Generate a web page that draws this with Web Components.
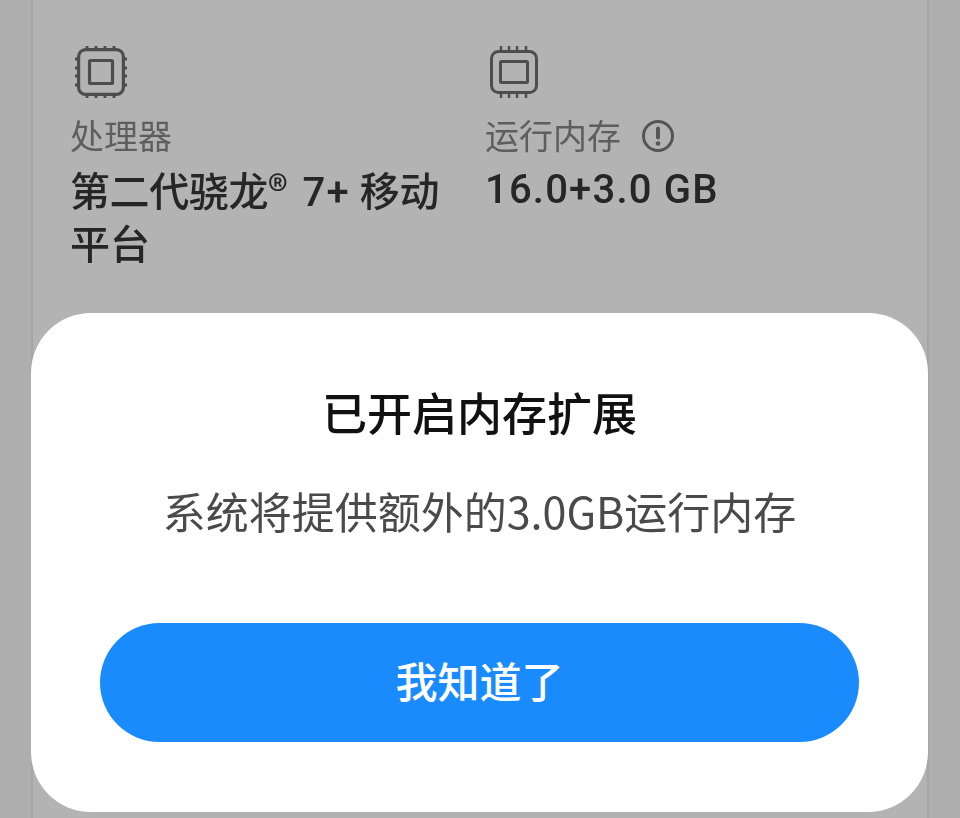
<!DOCTYPE html>
<html lang="zh">
<head>
<meta charset="utf-8">
<title>内存扩展</title>
<style>
  html, body { margin: 0; padding: 0; height: 100%; }
  body {
    background: #aeaeae;
    font-family: "Noto Sans CJK SC", "Noto Sans", sans-serif;
    overflow: hidden;
  }
  .reg { font-family: "Noto Sans CJK SC", sans-serif; letter-spacing: 5px; }
  .num { letter-spacing: 1.2px; }
  .tight { letter-spacing: -0.4px; }
</style>
</head>
<body>
<spec-page>
  <spec-item slot="specs" label="处理器" icon="cpu"><span class="tight">第二代骁龙</span><span class="reg">®</span> <span class="num">7+</span> <span class="tight">移动</span><br>平台</spec-item>
  <spec-item slot="specs" label="运行内存" icon="ram" info="true"><span class="num">16.0+3.0 GB</span></spec-item>
  <info-dialog slot="dialog" heading="已开启内存扩展" message="系统将提供额外的3.0GB运行内存" action="我知道了"></info-dialog>
</spec-page>

<script>
const specPageTemplate = document.createElement("template");
specPageTemplate.innerHTML = `
  <style>
    :host {
      display: block;
      position: relative;
      height: 818px;
      box-sizing: border-box;
      padding: 0 31px;
    }
    .card {
      height: 100%;
      box-sizing: border-box;
      background: #b3b3b3;
      border-left: 2px solid #a5a5a5;
      border-right: 2px solid #a5a5a5;
      padding: 46px 0 0 37px;
    }
    .specs {
      display: grid;
      grid-template-columns: 415px 1fr;
    }
    .overlay {
      position: absolute;
      left: 31px;
      right: 32px;
      bottom: 6px;
    }
  </style>
  <div class="card">
    <div class="specs"><slot name="specs"></slot></div>
  </div>
  <div class="overlay"><slot name="dialog"></slot></div>
`;
class SpecPage extends HTMLElement {
  constructor() {
    super();
    this.attachShadow({ mode: "open" });
  }

  connectedCallback() {
    this.shadowRoot.append(specPageTemplate.content.cloneNode(true));
  }
}

const icons = {
  cpu: `<svg width="52" height="52" viewBox="0 0 52 52" fill="none" stroke="#4d4d4d" stroke-width="3.2">
      <rect x="3.6" y="3.6" width="44.8" height="44.8" rx="7"/>
      <rect x="14.5" y="14.5" width="23" height="23" rx="1"/>
      <path stroke-width="2.8" d="M12 0v3M21 0v3M30 0v3M39 0v3M12 49v3M21 49v3M30 49v3M39 49v3M0 13h3M0 22h3M0 30h3M0 39h3M49 13h3M49 22h3M49 30h3M49 39h3"/>
    </svg>`,
  ram: `<svg width="48" height="52" viewBox="0 0 48 52" fill="none" stroke="#4d4d4d" stroke-width="3">
      <rect x="1.5" y="5.5" width="45" height="41" rx="7"/>
      <rect x="10.5" y="15.5" width="27" height="21" rx="1"/>
      <path stroke-width="2.4" d="M11 0v4M19 0v4M27 0v4M36 0v4M11 48v4M19 48v4M27 48v4M36 48v4"/>
    </svg>`,
};

const specItemTemplate = document.createElement("template");
specItemTemplate.innerHTML = `
  <style>
    :host { display: block; }
    .icon { height: 52px; padding-left: 5px; display: flex; }
    .label {
      display: flex;
      align-items: center;
      gap: 20px;
      margin-top: 10px;
      height: 54px;
      font-size: 34px;
      color: #5e5e5e;
      filter: blur(0.4px);
    }
    .label svg { display: block; margin-top: 2px; }
    .label span { margin-top: -1px; }
    .value {
      margin-top: 1px;
      width: 385px;
      font-family: Roboto, "Noto Sans CJK SC", sans-serif;
      font-size: 40px;
      line-height: 53px;
      font-weight: 500;
      color: #262626;
      filter: blur(0.4px);
    }
  </style>
  <div class="icon"></div>
  <div class="label"><span id="label"></span></div>
  <div class="value"><slot></slot></div>
`;
class SpecItem extends HTMLElement {
  constructor() {
    super();
    this.attachShadow({ mode: "open" });
  }

  connectedCallback() {
    this.shadowRoot.append(specItemTemplate.content.cloneNode(true));
    this.shadowRoot.querySelector(".icon").innerHTML = icons[this.getAttribute("icon")];
    this.shadowRoot.querySelector("#label").innerText = this.getAttribute("label");

    if (this.getAttribute("info") === "true") {
      this.shadowRoot.querySelector(".label").insertAdjacentHTML("beforeend", `
        <svg width="34" height="34" viewBox="0 0 34 34" fill="none" stroke="#555">
          <circle cx="17" cy="17" r="14.5" stroke-width="3"/>
          <path stroke-width="4" stroke-linecap="round" d="M17 9.5v9"/>
          <circle cx="17" cy="24.5" r="2.3" fill="#555" stroke="none"/>
        </svg>`);
    }
  }
}

const infoDialogTemplate = document.createElement("template");
infoDialogTemplate.innerHTML = `
  <style>
    :host { display: block; }
    .dialog {
      display: flex;
      flex-direction: column;
      align-items: center;
      box-sizing: border-box;
      height: 499px;
      padding: 68px 69px 0;
      background: #fff;
      border-radius: 60px;
    }
    h2 {
      margin: 0;
      font-size: 45px;
      line-height: 62px;
      font-weight: 500;
      color: #111;
      filter: blur(0.4px);
    }
    p {
      margin: 37px 0 0;
      font-size: 43px;
      line-height: 60px;
      color: #4a4a4a;
      filter: blur(0.4px);
    }
    button {
      margin-top: 83px;
      width: 100%;
      height: 119px;
      padding: 0 0 6px;
      border: none;
      border-radius: 60px;
      background: #1a8bfd;
      color: #fff;
      font-family: inherit;
      font-size: 42px;
      font-weight: 500;
      cursor: pointer;
    }
  </style>
  <div class="dialog">
    <h2></h2>
    <p></p>
    <button></button>
  </div>
`;
class InfoDialog extends HTMLElement {
  constructor() {
    super();
    this.attachShadow({ mode: "open" });
  }

  connectedCallback() {
    this.shadowRoot.append(infoDialogTemplate.content.cloneNode(true));
    this.shadowRoot.querySelector("h2").innerText = this.getAttribute("heading");
    this.shadowRoot.querySelector("p").innerText = this.getAttribute("message");
    this.shadowRoot.querySelector("button").innerText = this.getAttribute("action");
  }
}

window.customElements.define("spec-page", SpecPage);
window.customElements.define("spec-item", SpecItem);
window.customElements.define("info-dialog", InfoDialog);
</script>
</body>
</html>
